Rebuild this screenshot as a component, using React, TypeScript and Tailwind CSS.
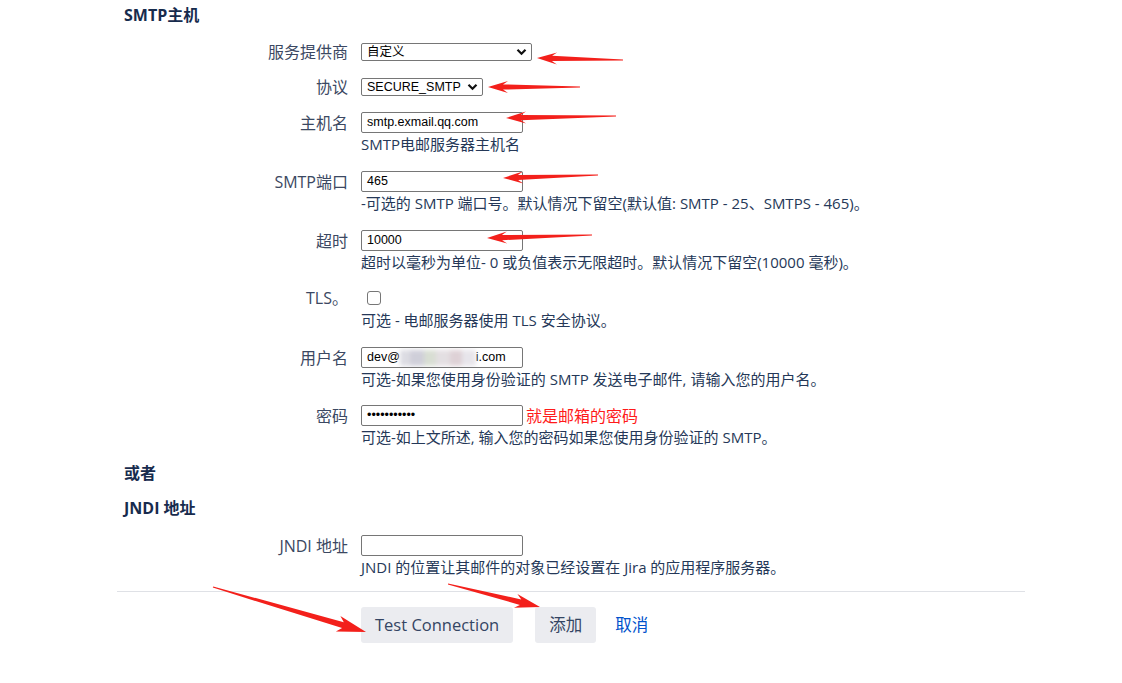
import React from 'react'

type Pt = [number, number]

// red annotation arrow painted over the form
function Arrow({ tail, tip, head = 17, wing = 6, neck = 2.6 }: { tail: Pt; tip: Pt; head?: number; wing?: number; neck?: number }) {
  const dx = tail[0] - tip[0]
  const dy = tail[1] - tip[1]
  const len = Math.hypot(dx, dy)
  const ux = dx / len
  const uy = dy / len
  const nx = -uy
  const ny = ux
  const at = (d: number, w: number): string =>
    `${(tip[0] + ux * d + nx * w).toFixed(1)},${(tip[1] + uy * d + ny * w).toFixed(1)}`
  const pts = [
    at(0, 0),
    at(head + 3, wing),
    at(head - 2, neck),
    at(len, 0.6),
    at(len, -0.6),
    at(head - 2, -neck),
    at(head + 3, -wing),
  ].join(' ')
  return <polygon points={pts} fill="#f3201b" />
}

function TextBox({ value, w = 'w-[162px]', children }: { value?: string; w?: string; children?: React.ReactNode }) {
  return (
    <div className={`${w} h-[21px] border border-[#767676] rounded-[2px] bg-white flex items-center px-[5px] font-['Liberation_Sans',Arial,sans-serif] text-[12.5px] text-black whitespace-nowrap overflow-hidden`}>
      {value}
      {children}
    </div>
  )
}

function Select({ value, w }: { value: string; w: string }) {
  return (
    <div className={`${w} h-[18px] border border-[#767676] rounded-[2px] bg-white flex items-center justify-between pl-[5px] pr-[4px] font-['Liberation_Sans','Noto_Sans_CJK_SC',sans-serif] text-[12.5px] text-black`}>
      <span>{value}</span>
      <svg width="11" height="8" viewBox="0 0 11 8">
        <path d="M1.5 1.8 L5.5 5.8 L9.5 1.8" stroke="#111" strokeWidth="2.2" fill="none" />
      </svg>
    </div>
  )
}

function Field({ label, h = 'h-[21px]', desc, children, className = '' }: { label: string; h?: string; desc?: string; children: React.ReactNode; className?: string }) {
  return (
    <div className={`grid grid-cols-[231px_1fr] gap-x-[13px] ${className}`}>
      <div className={`${h} flex items-center justify-end text-[16px] text-[#3b4862] whitespace-nowrap`}>{label}</div>
      <div>
        <div className={`${h} flex items-center`}>{children}</div>
        {desc && <div className="text-[15px] leading-[22px] text-[#253858] whitespace-nowrap">{desc}</div>}
      </div>
    </div>
  )
}

export default function App() {
  return (
    <div className="relative min-h-screen bg-white font-['Open_Sans','Noto_Sans_CJK_SC',sans-serif]">
      <div className="ml-[117px] w-[908px] pb-10">
        <h3 className="pl-[7px] pt-[3px] leading-6 text-[16px] font-bold text-[#172b4d]">SMTP主机</h3>

        <Field label="服务提供商" h="h-[18px]" className="mt-[16px]">
          <Select value="自定义" w="w-[171px]" />
        </Field>
        <Field label="协议" h="h-[18px]" className="mt-[17px]">
          <Select value="SECURE_SMTP" w="w-[122px]" />
        </Field>
        <Field label="主机名" desc="SMTP电邮服务器主机名" className="mt-[16px]">
          <TextBox value="smtp.exmail.qq.com" />
        </Field>
        <Field label="SMTP端口" desc="-可选的 SMTP 端口号。默认情况下留空(默认值: SMTP - 25、SMTPS - 465)。" className="mt-[16px]">
          <TextBox value="465" />
        </Field>
        <Field label="超时" desc="超时以毫秒为单位- 0 或负值表示无限超时。默认情况下留空(10000 毫秒)。" className="mt-[16px]">
          <TextBox value="10000" />
        </Field>
        <Field label="TLS。" h="h-[22px]" desc="可选 - 电邮服务器使用 TLS 安全协议。" className="mt-[14px]">
          <div className="ml-[6px] w-[14px] h-[14px] border border-[#767676] rounded-[3px] bg-white" />
        </Field>
        <Field label="用户名" desc="可选-如果您使用身份验证的 SMTP 发送电子邮件, 请输入您的用户名。" className="mt-[16px]">
          <TextBox>
            <span>dev@</span>
            <span className="flex h-[16px] w-[76px] blur-[2px] opacity-80">
              <span className="w-[10px] bg-[#d4d4dc]" />
              <span className="w-[14px] bg-[#c4c3d0]" />
              <span className="w-[12px] bg-[#cfd6c9]" />
              <span className="w-[14px] bg-[#ddd7db]" />
              <span className="w-[12px] bg-[#d6c6cc]" />
              <span className="w-[14px] bg-[#e2dfe6]" />
            </span>
            <span>i.com</span>
          </TextBox>
        </Field>
        <Field label="密码" desc="可选-如上文所述, 输入您的密码如果您使用身份验证的 SMTP。" className="mt-[15px]">
          <TextBox value="•••••••••••" />
          <span className="ml-[3px] text-[16px] text-[#ff1a1a] whitespace-nowrap">就是邮箱的密码</span>
        </Field>

        <h3 className="mt-[13px] pl-[7px] leading-6 text-[16px] font-bold text-[#172b4d]">或者</h3>
        <h3 className="mt-[11px] pl-[7px] leading-6 text-[16px] font-bold text-[#172b4d]">JNDI 地址</h3>

        <Field label="JNDI 地址" desc="JNDI 的位置让其邮件的对象已经设置在 Jira 的应用程序服务器。" className="mt-[15px]">
          <TextBox />
        </Field>

        <div className="mt-[13px] border-t border-[#dfe1e6]" />

        <div className="mt-[15px] grid grid-cols-[231px_1fr] gap-x-[13px]">
          <div />
          <div className="flex items-center">
            <button className="h-9 px-[14px] rounded-[3px] bg-[#ebecf0] text-[16.5px] text-[#344563]">Test Connection</button>
            <button className="ml-[22px] h-9 px-[14px] rounded-[3px] bg-[#ebecf0] text-[16.5px] text-[#344563]">添加</button>
            <button className="ml-[5px] h-9 px-[14px] text-[16.5px] text-[#0052cc]">取消</button>
          </div>
        </div>
      </div>

      {/* annotations */}
      <svg className="absolute inset-0 pointer-events-none" width="1122" height="683">
        <Arrow tip={[537, 58]} tail={[623, 60]} />
        <Arrow tip={[488, 87]} tail={[580, 87]} />
        <Arrow tip={[506, 118]} tail={[616, 116]} />
        <Arrow tip={[503, 178]} tail={[598, 175]} />
        <Arrow tip={[487, 238]} tail={[592, 235]} />
        <Arrow tip={[366, 632]} tail={[213, 587]} head={26} wing={8} neck={3} />
        <Arrow tip={[540, 607]} tail={[448, 584]} head={22} wing={7} neck={2.8} />
      </svg>
    </div>
  )
}
